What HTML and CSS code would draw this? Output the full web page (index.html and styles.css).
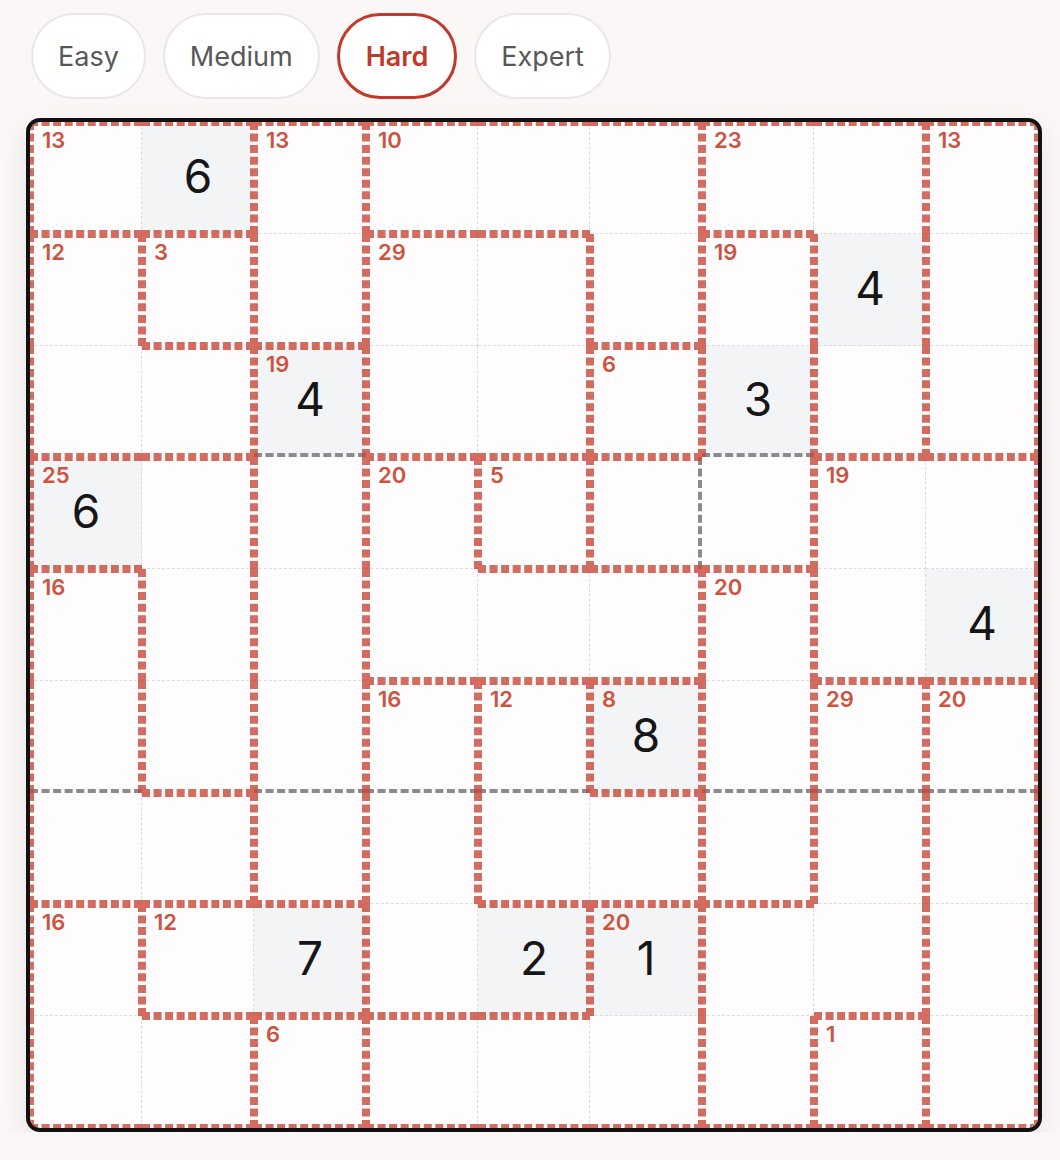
FILE: index.html
```html
<!DOCTYPE html>
<html lang="en">
<head>
<meta charset="utf-8">
<title>Killer Sudoku</title>
<link rel="stylesheet" href="styles.css">
</head>
<body>
<div class="page">
  <div class="levels">
    <button class="level">Easy</button>
    <button class="level">Medium</button>
    <button class="level active">Hard</button>
    <button class="level">Expert</button>
  </div>
  <div class="board">
    <div class="grid">
      <!-- row 0 -->
      <div class="cell t l b g-r"><span class="sum">13</span></div>
      <div class="cell given t r b"><span class="val">6</span></div>
      <div class="cell t r l g-b"><span class="sum">13</span></div>
      <div class="cell t l b g-r"><span class="sum">10</span></div>
      <div class="cell t b g-r"></div>
      <div class="cell t r g-b"></div>
      <div class="cell t l b g-r"><span class="sum">23</span></div>
      <div class="cell t r g-b"></div>
      <div class="cell t r l g-b"><span class="sum">13</span></div>
      <!-- row 1 -->
      <div class="cell t r l g-b"><span class="sum">12</span></div>
      <div class="cell t r b l"><span class="sum">3</span></div>
      <div class="cell r b l"></div>
      <div class="cell t l g-r g-b"><span class="sum">29</span></div>
      <div class="cell t r g-b"></div>
      <div class="cell r b l"></div>
      <div class="cell t r l g-b"><span class="sum">19</span></div>
      <div class="cell given r l g-b"><span class="val">4</span></div>
      <div class="cell r l g-b"></div>
      <!-- row 2 -->
      <div class="cell l b g-r"></div>
      <div class="cell t r b"></div>
      <div class="cell given t r l x-b"><span class="sum">19</span><span class="val">4</span></div>
      <div class="cell l b g-r"></div>
      <div class="cell r b"></div>
      <div class="cell t r b l"><span class="sum">6</span></div>
      <div class="cell given r l x-b"><span class="val">3</span></div>
      <div class="cell r b l"></div>
      <div class="cell r b l"></div>
      <!-- row 3 -->
      <div class="cell given t l b g-r"><span class="sum">25</span><span class="val">6</span></div>
      <div class="cell t r g-b"></div>
      <div class="cell r l g-b"></div>
      <div class="cell t r l g-b"><span class="sum">20</span></div>
      <div class="cell t r b l"><span class="sum">5</span></div>
      <div class="cell t l b x-r"></div>
      <div class="cell r b"></div>
      <div class="cell t l g-r g-b"><span class="sum">19</span></div>
      <div class="cell t r g-b"></div>
      <!-- row 4 -->
      <div class="cell t r l g-b"><span class="sum">16</span></div>
      <div class="cell r l g-b"></div>
      <div class="cell r l g-b"></div>
      <div class="cell l b g-r"></div>
      <div class="cell t b g-r"></div>
      <div class="cell t r b"></div>
      <div class="cell t r l g-b"><span class="sum">20</span></div>
      <div class="cell l b g-r"></div>
      <div class="cell given r b"><span class="val">4</span></div>
      <!-- row 5 -->
      <div class="cell r l x-b"></div>
      <div class="cell r b l"></div>
      <div class="cell r l x-b"></div>
      <div class="cell t r l x-b"><span class="sum">16</span></div>
      <div class="cell t r l x-b"><span class="sum">12</span></div>
      <div class="cell given t r b l"><span class="sum">8</span><span class="val">8</span></div>
      <div class="cell r l x-b"></div>
      <div class="cell t r l x-b"><span class="sum">29</span></div>
      <div class="cell t r l x-b"><span class="sum">20</span></div>
      <!-- row 6 -->
      <div class="cell l b g-r"></div>
      <div class="cell t r b"></div>
      <div class="cell r b l"></div>
      <div class="cell r l g-b"></div>
      <div class="cell l b g-r"></div>
      <div class="cell t r b"></div>
      <div class="cell r b l"></div>
      <div class="cell r l g-b"></div>
      <div class="cell r l g-b"></div>
      <!-- row 7 -->
      <div class="cell t r l g-b"><span class="sum">16</span></div>
      <div class="cell t l b g-r"><span class="sum">12</span></div>
      <div class="cell given t r b"><span class="val">7</span></div>
      <div class="cell l b g-r"></div>
      <div class="cell given t r b"><span class="val">2</span></div>
      <div class="cell given t r l g-b"><span class="sum">20</span><span class="val">1</span></div>
      <div class="cell t l g-r g-b"></div>
      <div class="cell r b"></div>
      <div class="cell r l g-b"></div>
      <!-- row 8 -->
      <div class="cell l b g-r"></div>
      <div class="cell t r b"></div>
      <div class="cell t r b l"><span class="sum">6</span></div>
      <div class="cell t l b g-r"></div>
      <div class="cell t b g-r"></div>
      <div class="cell r b"></div>
      <div class="cell r b l"></div>
      <div class="cell t r b l"><span class="sum">1</span></div>
      <div class="cell r b l"></div>
    </div>
  </div>
</div>
</body>
</html>
```

FILE: styles.css
```css
:root {
  --cage: rgba(200, 72, 58, 0.8);
  --label: #ca543f;
  --thin: #dedcdf;
  --box: #8b8a8e;
}

* { box-sizing: border-box; }

html, body {
  margin: 0;
  padding: 0;
  background: #fbf7f7;
}

body {
  font-family: "Inter", "Noto Sans", sans-serif;
}

.page {
  padding: 13px 0 0 26px;
}

.levels {
  display: flex;
  gap: 17px;
  padding-left: 5px;
  margin-bottom: 19px;
}

.level {
  height: 86px;
  padding: 0 25px;
  border: 2px solid #ebe7e8;
  border-radius: 43px;
  background: #ffffff;
  color: #585858;
  font-family: "Inter", "Noto Sans", sans-serif;
  font-size: 27px;
  font-weight: 400;
  cursor: pointer;
}

.level.active {
  border: 3px solid #c0392b;
  padding: 0 26px;
  color: #c0392b;
  font-weight: 600;
}

.board {
  width: 1016px;
  border: 4px solid #141111;
  border-radius: 14px;
  overflow: hidden;
  background: #fffcfd;
  box-shadow: 0 10px 28px rgba(60, 40, 40, 0.09);
}

.grid {
  display: grid;
  grid-template-columns: repeat(9, 112px);
  grid-template-rows: repeat(9, 111.78px);
}

.cell {
  position: relative;
  display: flex;
  align-items: center;
  justify-content: center;
}

.cell.given {
  background: #f3f4f6;
}

.cell::before,
.cell::after {
  content: "";
  position: absolute;
  inset: 0;
  pointer-events: none;
}

/* thin grid lines and 3x3 box lines */
.g-r::before { border-right: 1px dashed var(--thin); }
.g-b::before { border-bottom: 1px dashed var(--thin); }
.g-r.g-b::before { border-right: 1px dashed var(--thin); border-bottom: 1px dashed var(--thin); }
.x-r::before { border-right: 4px dashed var(--box); }
.x-b::before { border-bottom: 4px dashed var(--box); }

/* cage outlines */
.t::after { border-top: 4px dashed var(--cage); }
.r::after { border-right: 4px dashed var(--cage); }
.b::after { border-bottom: 4px dashed var(--cage); }
.l::after { border-left: 4px dashed var(--cage); }
.t.r::after { border-top: 4px dashed var(--cage); border-right: 4px dashed var(--cage); }
.t.b::after { border-top: 4px dashed var(--cage); border-bottom: 4px dashed var(--cage); }
.t.l::after { border-top: 4px dashed var(--cage); border-left: 4px dashed var(--cage); }
.r.b::after { border-right: 4px dashed var(--cage); border-bottom: 4px dashed var(--cage); }
.r.l::after { border-right: 4px dashed var(--cage); border-left: 4px dashed var(--cage); }
.b.l::after { border-bottom: 4px dashed var(--cage); border-left: 4px dashed var(--cage); }
.t.r.b::after { border-top: 4px dashed var(--cage); border-right: 4px dashed var(--cage); border-bottom: 4px dashed var(--cage); }
.t.r.l::after { border-top: 4px dashed var(--cage); border-right: 4px dashed var(--cage); border-left: 4px dashed var(--cage); }
.t.b.l::after { border-top: 4px dashed var(--cage); border-bottom: 4px dashed var(--cage); border-left: 4px dashed var(--cage); }
.r.b.l::after { border-right: 4px dashed var(--cage); border-bottom: 4px dashed var(--cage); border-left: 4px dashed var(--cage); }
.t.r.b.l::after { border: 4px dashed var(--cage); }

.sum {
  position: absolute;
  top: 7px;
  left: 12px;
  z-index: 2;
  font-size: 22px;
  line-height: 1;
  font-weight: 600;
  color: var(--label);
}

.val {
  position: relative;
  z-index: 2;
  margin-top: -4px;
  font-size: 46px;
  line-height: 1;
  font-weight: 400;
  color: #161616;
}
```
